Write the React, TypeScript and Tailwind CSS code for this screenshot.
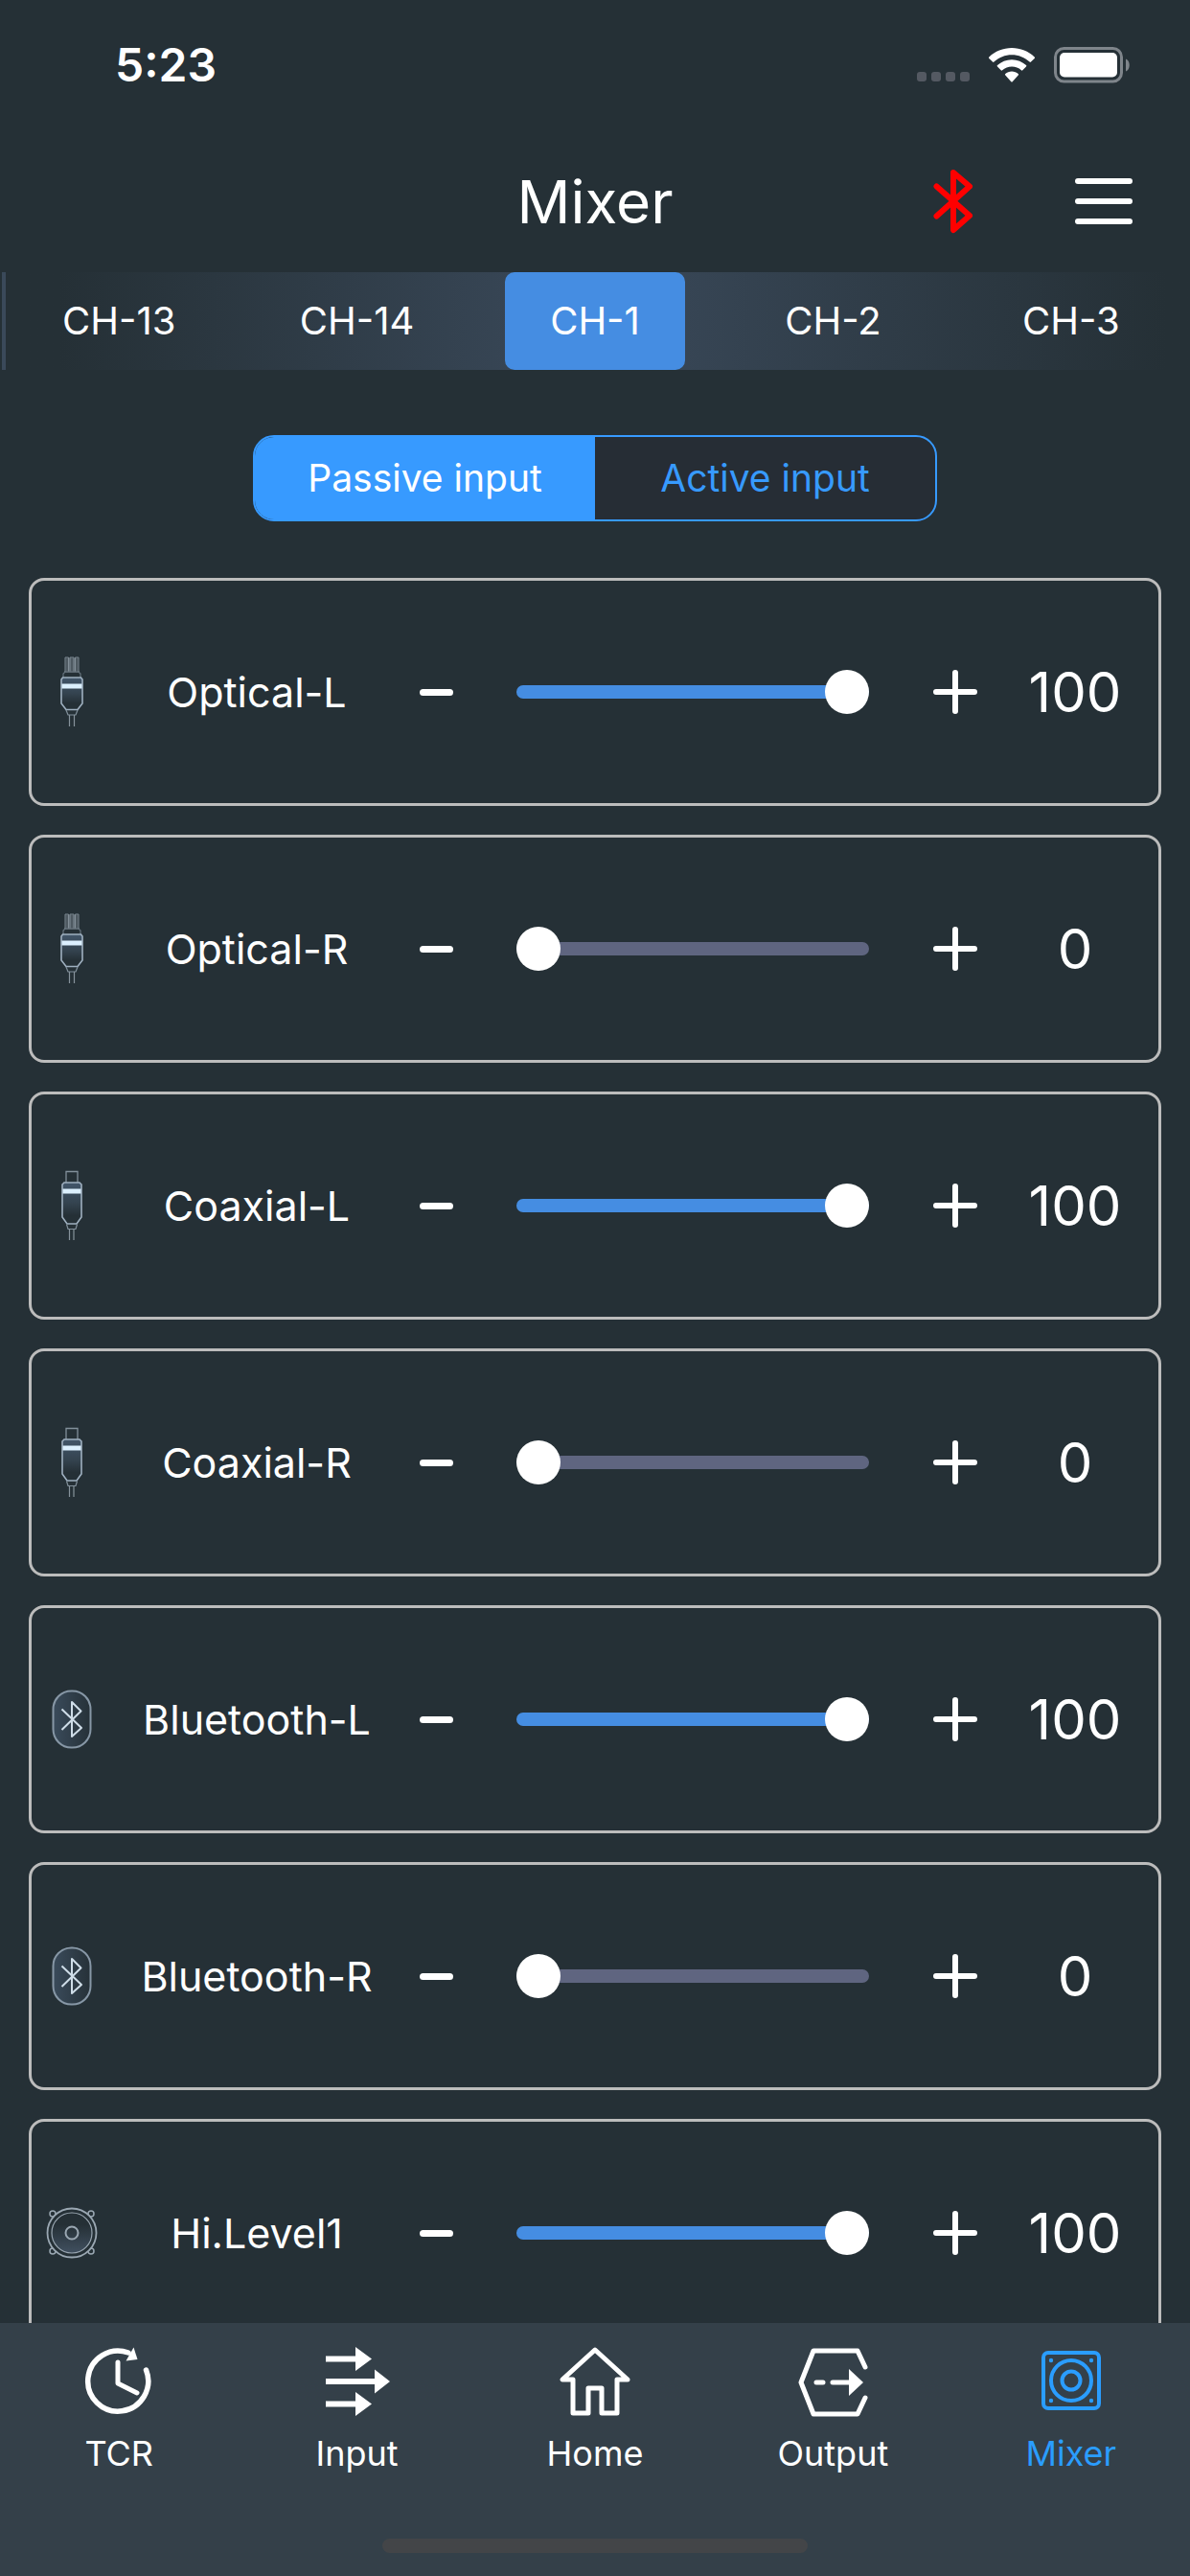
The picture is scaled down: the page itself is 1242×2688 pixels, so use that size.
import { ReactNode, useState } from 'react';
import clsx from 'clsx';

type Kind = 'optical' | 'coaxial' | 'bluetooth' | 'speaker';

interface Source {
  name: string;
  kind: Kind;
  level: number;
}

const channels = ['CH-13', 'CH-14', 'CH-1', 'CH-2', 'CH-3'];
const modes = ['Passive input', 'Active input'];

const initialSources: Source[] = [
  { name: 'Optical-L', kind: 'optical', level: 100 },
  { name: 'Optical-R', kind: 'optical', level: 0 },
  { name: 'Coaxial-L', kind: 'coaxial', level: 100 },
  { name: 'Coaxial-R', kind: 'coaxial', level: 0 },
  { name: 'Bluetooth-L', kind: 'bluetooth', level: 100 },
  { name: 'Bluetooth-R', kind: 'bluetooth', level: 0 },
  { name: 'Hi.Level1', kind: 'speaker', level: 100 },
];

const Gradients = () => (
  <svg width="0" height="0" className="absolute" aria-hidden="true">
    <defs>
      <linearGradient id="plug" x1="0" y1="0" x2="0" y2="1">
        <stop offset="0" stopColor="#42566a" />
        <stop offset="0.5" stopColor="#34434f" />
        <stop offset="0.8" stopColor="#253036" />
      </linearGradient>
      <linearGradient id="badge" x1="0" y1="0" x2="1" y2="0">
        <stop offset="0" stopColor="#3a4b5b" />
        <stop offset="1" stopColor="#263138" />
      </linearGradient>
      <linearGradient id="cone" x1="0" y1="0" x2="0" y2="1">
        <stop offset="0.3" stopColor="#253036" />
        <stop offset="1" stopColor="#415060" />
      </linearGradient>
    </defs>
  </svg>
);

const OpticalIcon = () => (
  <svg width="26" height="74" viewBox="0 0 26 74" fill="none">
    <path
      d="M6 16V1h3.500v15M11 16V1h4v15M16.500 16V1H20v15M5 16h16"
      stroke="#7d8992"
      strokeWidth="1"
    />
    <path d="M6.500 1.500h13V15h-13z" fill="#8b98a2" opacity="0.4" />
    <path d="M4 22v-4l2-2h14l2 2v4" stroke="#66737d" strokeWidth="1.200" />
    <path
      d="M3.500 22h19l1.500 2v25l-5 6.500H7L2 49V24z"
      fill="url(#plug)"
      stroke="#9fb0c0"
      strokeWidth="1.600"
    />
    <path d="M2.500 28.500h21v5h-21z" fill="#dcf0ff" />
    <path d="M7 56l2 5h8l2-5" stroke="#82909b" strokeWidth="1.200" />
    <path d="M10.500 61v12M15.500 61v12" stroke="#87939c" strokeWidth="1.200" />
  </svg>
);

const CoaxialIcon = () => (
  <svg width="24" height="74" viewBox="0 0 24 74" fill="none">
    <path d="M6 13V1.500h12V13" stroke="#82909b" strokeWidth="1.300" />
    <path
      d="M4 13h16l2 2v34l-5 7H7l-5-7V15z"
      fill="url(#plug)"
      stroke="#9fb0c0"
      strokeWidth="1.600"
    />
    <path d="M2.500 19.500h19v5h-19z" fill="#dcf0ff" />
    <path d="M6.500 56.500l1.500 5h8l1.500-5" stroke="#82909b" strokeWidth="1.200" />
    <path d="M9.500 62v11M14 62v11" stroke="#87939c" strokeWidth="1.200" />
  </svg>
);

const BluetoothBadge = () => (
  <svg width="42" height="62" viewBox="0 0 42 62" fill="none">
    <rect
      x="1.500"
      y="1.500"
      width="39"
      height="59"
      rx="19"
      fill="url(#badge)"
      stroke="#8797a6"
      strokeWidth="2"
    />
    <path
      d="M10.500 20.500L31 40L21 49V13l9.500 9.500L10.500 42"
      stroke="#cfdde8"
      strokeWidth="2"
      strokeLinejoin="round"
    />
  </svg>
);

const SpeakerIcon = () => (
  <svg width="54" height="54" viewBox="0 0 54 54" fill="none" stroke="#9aa7b2">
    <circle cx="7" cy="7" r="3" strokeWidth="1.500" />
    <circle cx="47" cy="7" r="3" strokeWidth="1.500" />
    <circle cx="7" cy="46" r="3" strokeWidth="1.500" />
    <circle cx="47" cy="46" r="3" strokeWidth="1.500" />
    <circle cx="27" cy="27" r="25.500" fill="#253036" strokeWidth="1.800" />
    <circle cx="27" cy="27" r="21" fill="url(#cone)" strokeWidth="1.200" />
    <circle cx="27" cy="27" r="6.500" strokeWidth="2" />
  </svg>
);

const sourceIcons: Record<Kind, ReactNode> = {
  optical: <OpticalIcon />,
  coaxial: <CoaxialIcon />,
  bluetooth: <BluetoothBadge />,
  speaker: <SpeakerIcon />,
};

const tabs: { label: string; icon: ReactNode }[] = [
  {
    label: 'TCR',
    icon: (
      <svg width="74" height="74" viewBox="0 0 74 74" fill="none" stroke="currentColor">
        <path
          d="M65.500 25A31.500 31.500 0 1 1 47 7"
          strokeWidth="5.500"
          strokeLinecap="round"
        />
        <path d="M52.500 1.500L56.500 14l-12 1.500z" fill="currentColor" stroke="none" />
        <path
          d="M36 17v22l20 10"
          strokeWidth="5"
          strokeLinecap="round"
          strokeLinejoin="round"
        />
      </svg>
    ),
  },
  {
    label: 'Input',
    icon: (
      <svg width="74" height="74" viewBox="0 0 74 74" fill="currentColor">
        <path d="M4 10.500h31V1l17 12.500L35 26v-9.500H4z" />
        <path d="M4 34h51v-9.500L71 37 55 49.500V40H4z" />
        <path d="M4 57.500h31V48l17 12.500L35 73v-9.500H4z" />
      </svg>
    ),
  },
  {
    label: 'Home',
    icon: (
      <svg width="76" height="74" viewBox="0 0 76 74" fill="none" stroke="currentColor">
        <path
          d="M38 4L4 35h11v35h16V44h14v26h16V35h11z"
          strokeWidth="5"
          strokeLinejoin="round"
        />
      </svg>
    ),
  },
  {
    label: 'Output',
    icon: (
      <svg width="74" height="74" viewBox="0 0 74 74" fill="none" stroke="currentColor">
        <path
          d="M71 22L63 5H17L4 38l13 33h46l8-17"
          strokeWidth="5"
          strokeLinecap="round"
          strokeLinejoin="round"
        />
        <path d="M20 38h7M37 38h18" strokeWidth="5" strokeLinecap="round" />
        <path d="M54 24l15 14-15 14z" fill="currentColor" stroke="none" />
      </svg>
    ),
  },
  {
    label: 'Mixer',
    icon: (
      <svg width="74" height="74" viewBox="0 0 74 74" fill="none" stroke="currentColor">
        <rect x="8" y="7" width="58" height="58" rx="5" strokeWidth="4" />
        <circle cx="37" cy="36" r="21" strokeWidth="4" />
        <circle cx="37" cy="36" r="9.500" strokeWidth="4" />
        <g fill="currentColor" stroke="none">
          <circle cx="16" cy="15" r="2.200" />
          <circle cx="58" cy="15" r="2.200" />
          <circle cx="16" cy="57" r="2.200" />
          <circle cx="58" cy="57" r="2.200" />
        </g>
      </svg>
    ),
  },
];

const StatusBar = () => (
  <div className="flex h-[136px] shrink-0 items-center justify-between pl-[120px] pr-[62px]">
    <span className="text-[48px] font-semibold">5:23</span>
    <div className="flex items-center gap-5">
      <div className="flex gap-[5px] pt-6">
        <i className="size-[10px] rounded-[3px] bg-[#545962]" />
        <i className="size-[10px] rounded-[3px] bg-[#545962]" />
        <i className="size-[10px] rounded-[3px] bg-[#545962]" />
        <i className="size-[10px] rounded-[3px] bg-[#545962]" />
      </div>
      <svg width="48" height="36" viewBox="0 0 48 36" fill="currentColor">
        <path d="M24 0C33 0 41.500 3.500 47.700 9.500a1 1 0 0 1 0 1.400L44 14.600a1 1 0 0 1-1.400 0C37.500 9.900 31 7.300 24 7.300S10.500 9.900 5.400 14.600a1 1 0 0 1-1.400 0L.3 10.900a1 1 0 0 1 0-1.400C6.500 3.500 15 0 24 0z" />
        <path d="M24 12.300c5.700 0 11 2.200 15 5.800a1 1 0 0 1 0 1.500l-3.700 3.700a1 1 0 0 1-1.400 0A14.700 14.700 0 0 0 24 19.600c-3.700 0-7.200 1.400-9.900 3.700a1 1 0 0 1-1.400 0L9 19.600a1 1 0 0 1 0-1.500c4-3.600 9.300-5.800 15-5.800z" />
        <path d="M24 24.600c2.600 0 5 .9 6.700 2.400a1 1 0 0 1 0 1.500l-6 6.700a1 1 0 0 1-1.400 0l-6-6.700a1 1 0 0 1 0-1.500c1.700-1.500 4.100-2.400 6.700-2.400z" />
      </svg>
      <svg width="80" height="38" viewBox="0 0 80 38" fill="none">
        <rect x="1.500" y="1.500" width="69" height="34.500" rx="9" stroke="#7f858b" strokeWidth="3" />
        <rect x="6" y="6" width="60" height="25.500" rx="5" fill="#fff" />
        <path d="M75 12.500c5 2 5 11 0 13z" fill="#7f858b" />
      </svg>
    </div>
  </div>
);

const SourceRow = ({
  source,
  onChange,
}: {
  source: Source;
  onChange: (level: number) => void;
}) => {
  const { name, kind, level } = source;
  const id = `level-${name}`;

  return (
    <li className="flex h-[238px] shrink-0 items-center rounded-2xl border-3 border-[#bcbcbc] pr-1">
      <div className="flex w-[84px] justify-center">{sourceIcons[kind]}</div>
      <label htmlFor={id} className="w-[302px] text-center text-[43px]">
        {name}
      </label>
      <button
        type="button"
        aria-label={`Decrease ${name}`}
        onClick={() => onChange(Math.max(0, level - 1))}
        className="flex h-20 w-[72px] items-center justify-center"
      >
        <span className="h-[7px] w-[35px] rounded-full bg-white" />
      </button>
      <input
        id={id}
        type="range"
        min={0}
        max={100}
        value={level}
        onChange={(e) => onChange(Number(e.target.value))}
        style={{
          backgroundImage: `linear-gradient(to right, #458de2 ${level}%, #5f6580 ${level}%)`,
        }}
        className="mx-12 h-[14px] min-w-0 flex-1 appearance-none rounded-[7px] [&::-webkit-slider-thumb]:size-[46px] [&::-webkit-slider-thumb]:appearance-none [&::-webkit-slider-thumb]:rounded-full [&::-webkit-slider-thumb]:bg-white"
      />
      <button
        type="button"
        aria-label={`Increase ${name}`}
        onClick={() => onChange(Math.min(100, level + 1))}
        className="flex h-20 w-[84px] items-center justify-center"
      >
        <svg width="48" height="48" viewBox="0 0 48 48" stroke="#fff" strokeWidth="6" strokeLinecap="round">
          <path d="M4 24h40M24 4v40" />
        </svg>
      </button>
      <output htmlFor={id} className="w-[166px] text-center text-[58px]">
        {level}
      </output>
    </li>
  );
};

const App = () => {
  const [channel, setChannel] = useState('CH-1');
  const [mode, setMode] = useState(modes[0]);
  const [sources, setSources] = useState(initialSources);

  const setLevel = (name: string, level: number) =>
    setSources((all) => all.map((s) => (s.name === name ? { ...s, level } : s)));

  return (
    <div className="flex h-screen flex-col overflow-hidden bg-[#253036] font-['Inter',sans-serif] text-white">
      <Gradients />
      <StatusBar />

      <header className="grid h-[148px] shrink-0 grid-cols-3 items-center">
        <h1 className="col-start-2 text-center text-[62px]">Mixer</h1>
        <div className="flex items-center justify-end gap-[106px] pr-[60px]">
          <button type="button" aria-label="Bluetooth">
            <svg width="42" height="68" viewBox="0 0 42 68" fill="none">
              <path
                d="M3.500 18.500L38 49L21 64V4l17 14.500L3.500 49.500"
                stroke="#f00"
                strokeWidth="6"
                strokeLinecap="round"
                strokeLinejoin="round"
              />
            </svg>
          </button>
          <button type="button" aria-label="Menu" className="flex flex-col gap-[15px]">
            <span className="h-[6px] w-[60px] rounded-full bg-white" />
            <span className="h-[6px] w-[60px] rounded-full bg-white" />
            <span className="h-[6px] w-[60px] rounded-full bg-white" />
          </button>
        </div>
      </header>

      <div className="relative grid h-[102px] shrink-0 grid-cols-5 bg-linear-to-r from-[#253036] from-5% via-[#3a495a] to-[#253036] to-98%">
        <span className="absolute inset-y-0 left-[2px] w-1 bg-[#3a495a]" />
        {channels.map((ch) => (
          <button
            key={ch}
            type="button"
            onClick={() => setChannel(ch)}
            className={clsx(
              'mx-[30px] rounded-[10px] text-[40px]',
              ch === channel && 'bg-[#458de2]'
            )}
          >
            {ch}
          </button>
        ))}
      </div>

      <div className="mx-auto mt-[68px] grid h-[90px] w-[714px] shrink-0 grid-cols-2 overflow-hidden rounded-[22px] border-2 border-[#379aff] bg-[#262d35]">
        {modes.map((m) => (
          <button
            key={m}
            type="button"
            onClick={() => setMode(m)}
            className={clsx(
              'text-[39px]',
              m === mode ? 'bg-[#379aff]' : 'text-[#379aff]'
            )}
          >
            {m}
          </button>
        ))}
      </div>

      <ul className="mt-[59px] flex min-h-0 flex-1 flex-col gap-[30px] overflow-y-auto px-[30px] [scrollbar-width:none]">
        {sources.map((s) => (
          <SourceRow
            key={s.name}
            source={s}
            onChange={(level) => setLevel(s.name, level)}
          />
        ))}
      </ul>

      <nav className="flex h-[264px] shrink-0 flex-col justify-between bg-[#344049] pb-6 pt-6">
        <div className="grid grid-cols-5">
          {tabs.map(({ label, icon }) => (
            <a
              key={label}
              href={`#${label.toLowerCase()}`}
              className={clsx(
                'flex flex-col items-center gap-4 text-[36px] leading-[44px]',
                label === 'Mixer' && 'text-[#2a9dff]'
              )}
            >
              {icon}
              {label}
            </a>
          ))}
        </div>
        <div className="mx-auto h-[15px] w-[444px] rounded-full bg-[#434548]" />
      </nav>
    </div>
  );
};

export default App;
